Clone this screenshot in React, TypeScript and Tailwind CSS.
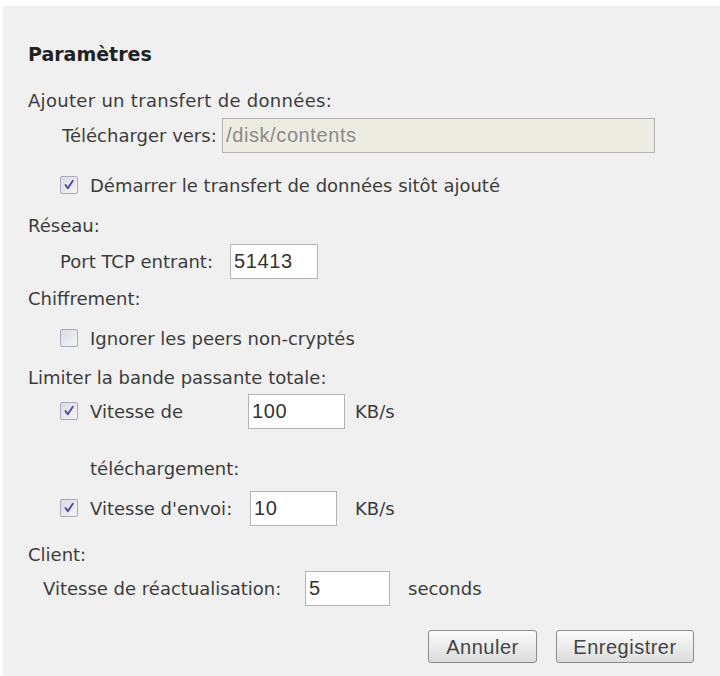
import React from "react";

function Check({ checked }: { checked: boolean }) {
  return (
    <span className="inline-flex h-[18px] w-[18px] shrink-0 items-center justify-center rounded-[2px] border border-[#a9abb8] bg-gradient-to-br from-[#d8d9e3] to-[#f6f6f8]">
      {checked && (
        <svg width="12" height="12" viewBox="0 0 12 12">
          <path d="M2.5 6 L4.8 9.2 L9.8 1.8" fill="none" stroke="#4a4a9a" strokeWidth="1.9" strokeLinecap="round" strokeLinejoin="round" />
        </svg>
      )}
    </span>
  );
}

function Field({ value, w, disabled }: { value: string; w: string; disabled?: boolean }) {
  return (
    <div
      className={`flex h-[35px] shrink-0 items-center border border-[#b4b4b4] px-[3px] text-[20px] tracking-[0.6px] font-['Liberation_Sans',sans-serif] ${
        disabled ? "bg-[#ecece3] text-[#8a8a8a]" : "bg-white text-[#333]"
      } ${w}`}
    >
      {value}
    </div>
  );
}

export default function App() {
  const label = "font-['DejaVu_Sans',sans-serif] text-[18px] text-[#3c3c3c]";
  return (
    <div className="h-[676px] w-[720px] bg-white pt-[6px] pl-[3px]">
      <div className={`h-[670px] w-[717px] bg-[#f0f0f0] pl-[25px] pr-[26px] pt-[31px] ${label}`}>
        <div className="flex h-[34px] items-center font-bold text-[19px] text-[#222]">Paramètres</div>
        <div className="mt-[12px] flex h-[34px] items-center tracking-[0.3px]">Ajouter un transfert de données:</div>
        <div className="mt-[1px] flex h-[34px] items-center pl-[34px]">
          <span className="w-[160px] shrink-0">Télécharger vers:</span>
          <Field value="/disk/contents" w="w-[433px]" disabled />
        </div>
        <div className="mt-[16px] flex h-[34px] items-center pl-[32px]">
          <Check checked />
          <span className="ml-[12px]">Démarrer le transfert de données sitôt ajouté</span>
        </div>
        <div className="mt-[6px] flex h-[34px] items-center">Réseau:</div>
        <div className="mt-[2px] flex h-[34px] items-center pl-[32px]">
          <span className="w-[170px] shrink-0">Port TCP entrant:</span>
          <Field value="51413" w="w-[88px]" />
        </div>
        <div className="mt-[3px] flex h-[34px] items-center">Chiffrement:</div>
        <div className="mt-[6px] flex h-[34px] items-center pl-[32px]">
          <Check checked={false} />
          <span className="ml-[12px]">Ignorer les peers non-cryptés</span>
        </div>
        <div className="mt-[5px] flex h-[34px] items-center">Limiter la bande passante totale:</div>
        <div className="mt-[0px] flex h-[34px] items-center pl-[32px]">
          <Check checked />
          <span className="ml-[12px] w-[158px] shrink-0">Vitesse de</span>
          <Field value="100" w="w-[97px]" />
          <span className="ml-[10px]">KB/s</span>
        </div>
        <div className="mt-[23px] flex h-[34px] items-center pl-[62px]">téléchargement:</div>
        <div className="mt-[6px] flex h-[34px] items-center pl-[32px]">
          <Check checked />
          <span className="ml-[12px] w-[160px] shrink-0">Vitesse d'envoi:</span>
          <Field value="10" w="w-[87px]" />
          <span className="ml-[18px]">KB/s</span>
        </div>
        <div className="mt-[12px] flex h-[34px] items-center">Client:</div>
        <div className="mt-[0px] flex h-[34px] items-center pl-[15px]">
          <span className="w-[262px] shrink-0">Vitesse de réactualisation:</span>
          <Field value="5" w="w-[85px]" />
          <span className="ml-[18px]">seconds</span>
        </div>
        <div className="mt-[25px] flex items-center justify-end gap-[19px]">
          <button className="h-[33px] w-[109px] rounded-[3px] border border-[#8c8c8c] bg-gradient-to-b from-[#fbfbfb] to-[#dcdcdc] font-['Liberation_Sans',sans-serif] text-[20px] tracking-[0.5px] text-[#444]">
            Annuler
          </button>
          <button className="h-[33px] w-[138px] rounded-[3px] border border-[#8c8c8c] bg-gradient-to-b from-[#fbfbfb] to-[#dcdcdc] font-['Liberation_Sans',sans-serif] text-[20px] tracking-[0.5px] text-[#444]">
            Enregistrer
          </button>
        </div>
      </div>
    </div>
  );
}
